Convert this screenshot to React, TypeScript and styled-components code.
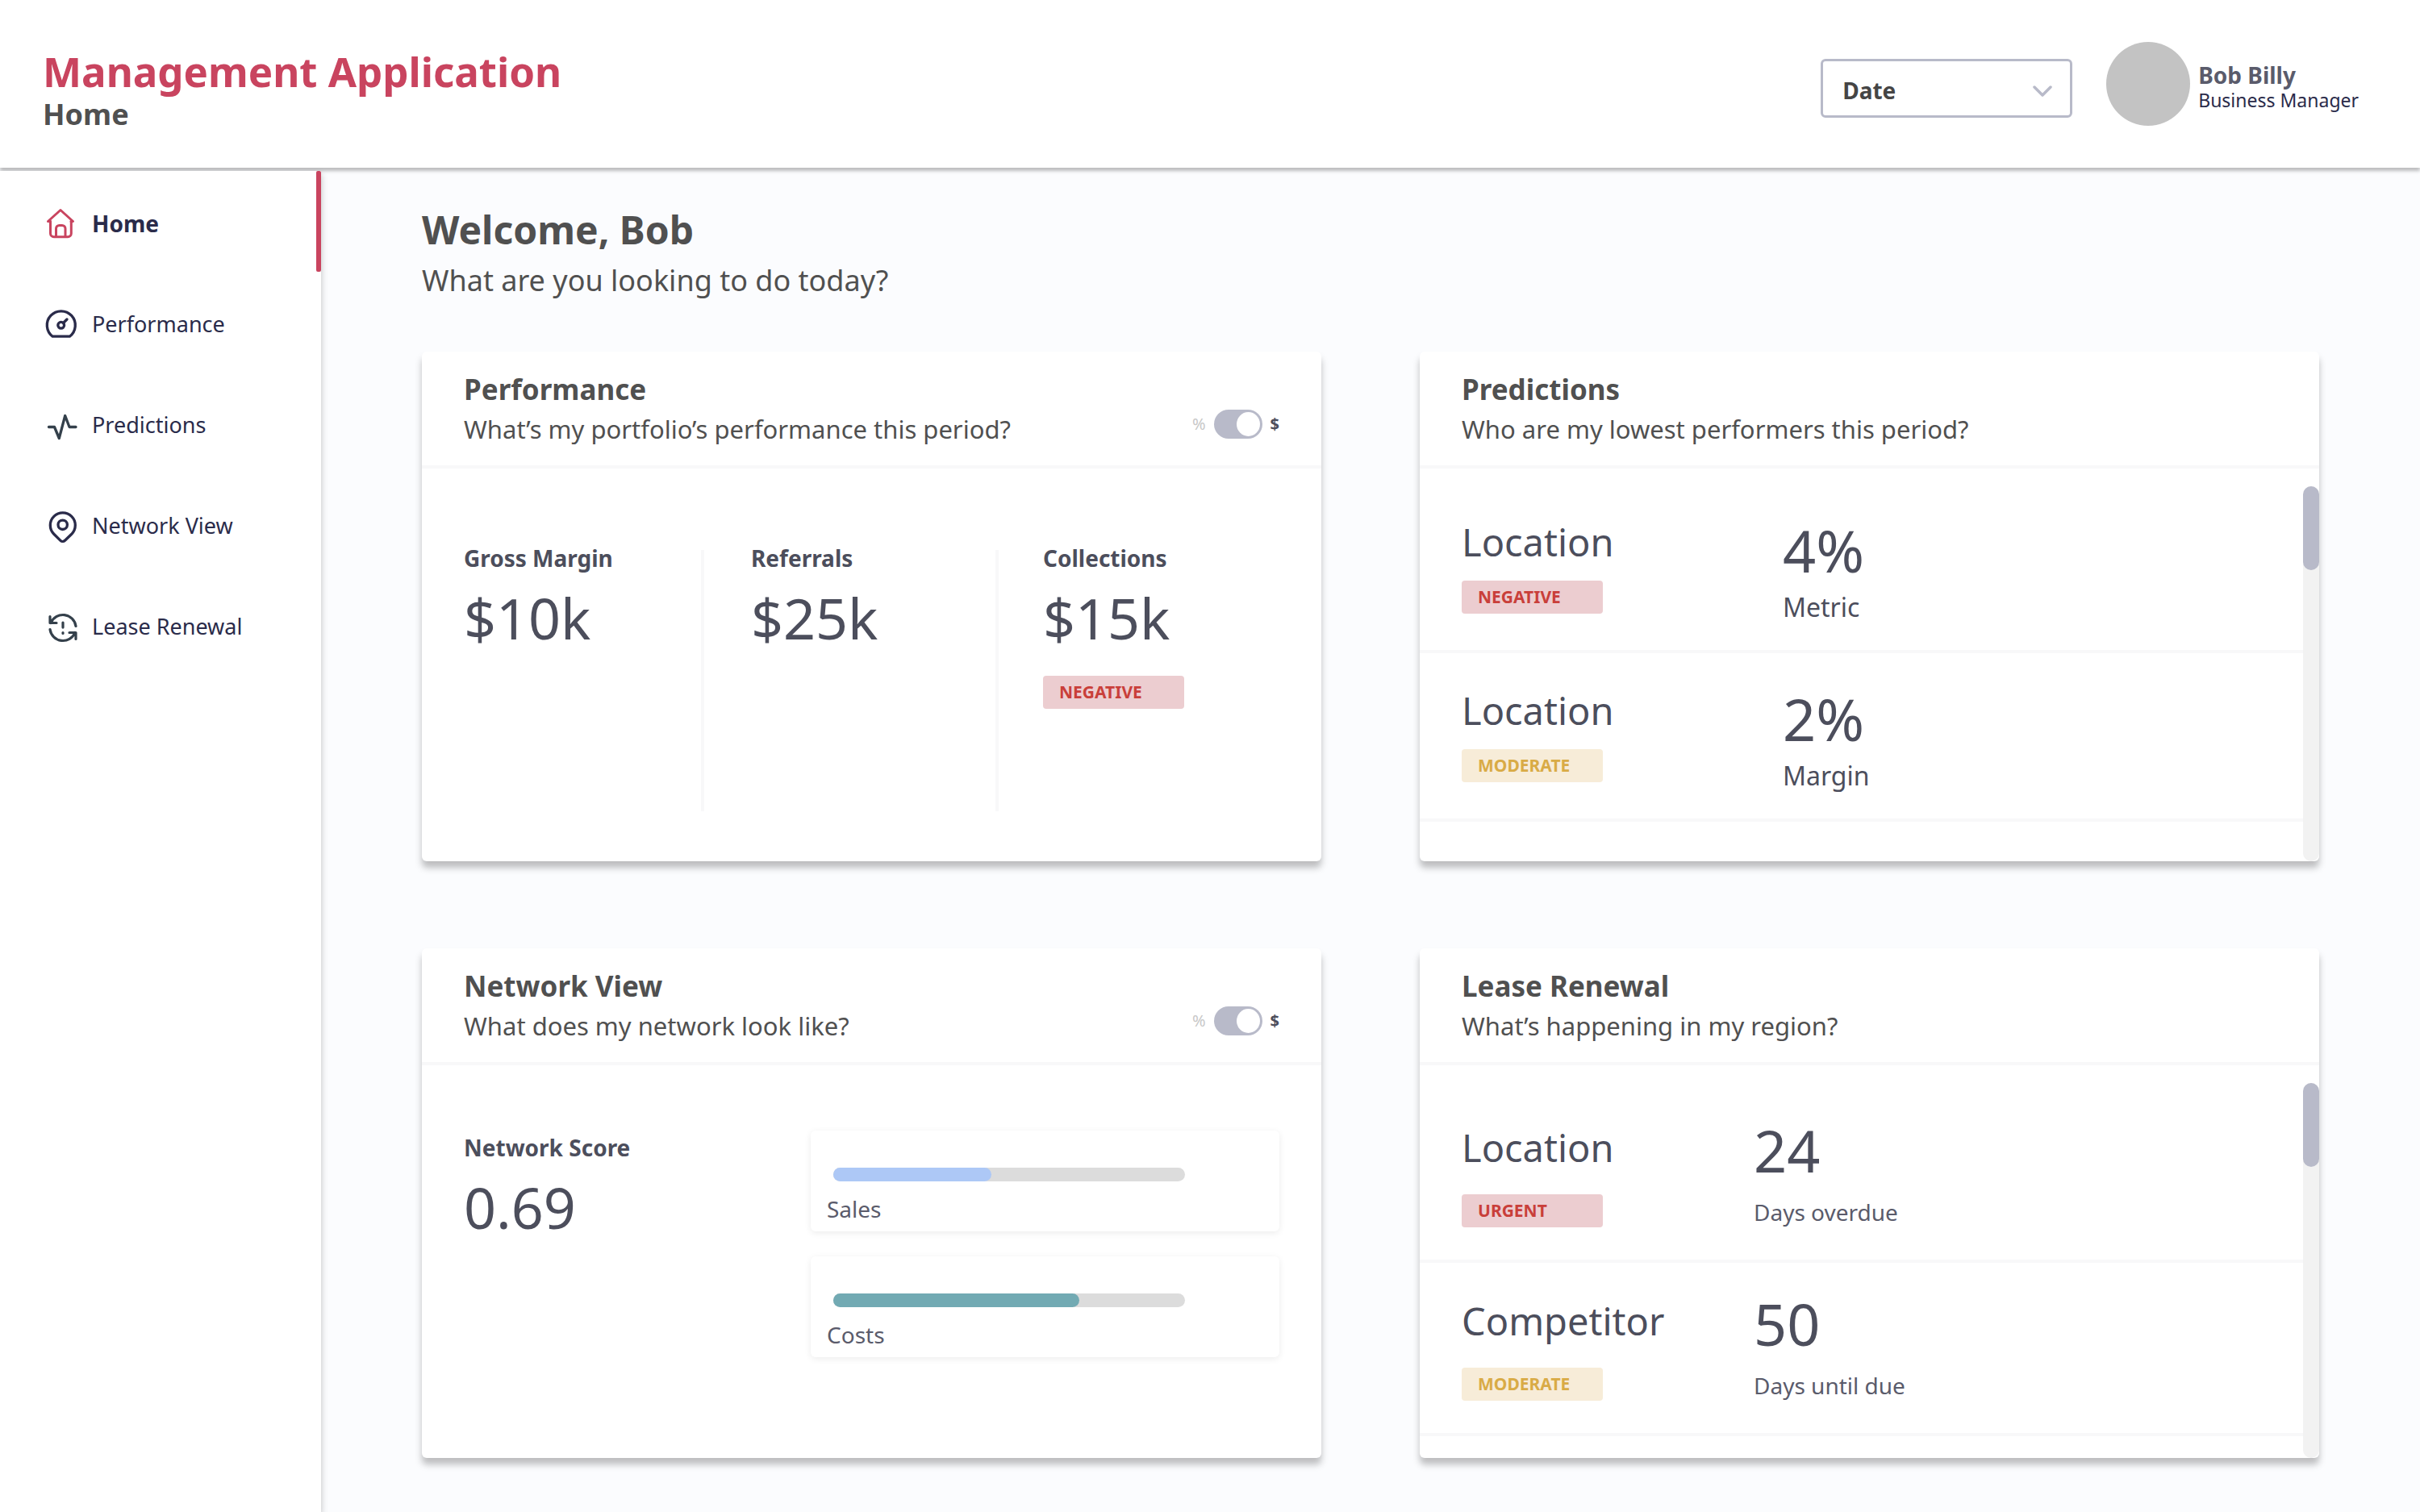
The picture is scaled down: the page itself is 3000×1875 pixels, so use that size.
import React, { useId, useState } from 'react';
import styled, { createGlobalStyle } from 'styled-components';

const color = {
  brand: '#c9445f',
  heading: '#505050',
  ink: '#4c4e5c',
  navy: '#2a2b4a',
  slate: '#34404b',
  muted: '#5a5b6b',
  line: '#f8f8f9',
  control: '#b8bac9',
  canvas: '#fbfcfe',
};

const GlobalStyle = createGlobalStyle`
  *, *::before, *::after { box-sizing: border-box; }
  body {
    margin: 0;
    background: ${color.canvas};
    font-family: "Noto Sans", "Open Sans", sans-serif;
    color: ${color.ink};
  }
  h1, h2, h3, p, ul { margin: 0; padding: 0; }
  ul { list-style: none; }
`;

/* ---------- shell ---------- */

const Page = styled.div`
  display: flex;
  flex-direction: column;
  min-height: 100vh;
`;

const Header = styled.header`
  position: relative;
  z-index: 1;
  display: flex;
  align-items: flex-start;
  padding: 52px 76px 43px 53px;
  background: #fff;
  box-shadow: 0 4px 4px rgba(0, 0, 0, 0.25);
`;

const Brand = styled.div`
  flex: 1;
  padding-top: 5px;
`;

const AppName = styled.p`
  font-size: 51px;
  font-weight: 700;
  line-height: 62px;
  color: ${color.brand};
`;

const PageName = styled.h1`
  font-size: 36px;
  font-weight: 700;
  line-height: 46px;
  color: ${color.heading};
`;

const SelectBox = styled.div`
  display: grid;
  align-items: center;
  width: 312px;
  margin: 21px 42px 0 0;
`;

const DateSelect = styled.select`
  grid-area: 1 / 1;
  width: 100%;
  height: 73px;
  padding: 4px 60px 0 24px;
  border: 3px solid ${color.control};
  border-radius: 6px;
  background: #fff;
  appearance: none;
  font: 700 28px "Noto Sans", sans-serif;
  color: #454545;
`;

const Chevron = styled.svg`
  grid-area: 1 / 1;
  justify-self: end;
  width: 26px;
  height: 16px;
  margin: 6px 24px 0 0;
  pointer-events: none;
`;

const Avatar = styled.div`
  width: 104px;
  height: 104px;
  margin-right: 10px;
  border-radius: 50%;
  background: #c3c3c3;
`;

const UserText = styled.div`
  padding-top: 26px;
`;

const UserName = styled.p`
  font-size: 28px;
  font-weight: 700;
  line-height: 30px;
  color: ${color.muted};
`;

const UserRole = styled.p`
  font-size: 23px;
  line-height: 32px;
  color: ${color.navy};
`;

const Columns = styled.div`
  display: flex;
  flex: 1;
`;

/* ---------- sidebar ---------- */

const Sidebar = styled.nav`
  position: relative;
  z-index: 2;
  flex: none;
  width: 398px;
  margin-top: 4px;
  background: #fff;
  box-shadow: 0 4px 8px rgba(0, 0, 0, 0.25);
`;

const NavLink = styled.a<{ $active?: boolean }>`
  display: flex;
  height: 125px;
  text-decoration: none;
  font-size: ${(p) => (p.$active ? 28 : 27)}px;
  font-weight: ${(p) => (p.$active ? 700 : 400)};
  color: ${color.navy};
`;

const NavLabel = styled.span`
  display: flex;
  flex: 1;
  align-items: center;
  gap: 16px;
  padding: 4px 0 0 54px;
`;

const ActiveBar = styled.span`
  width: 6px;
  border-radius: 2px;
  background: ${color.brand};
`;

const Icon = styled.svg`
  width: 44px;
  height: 44px;
  fill: none;
  stroke-linecap: round;
  stroke-linejoin: round;
`;

const HomeIcon = () => (
  <Icon viewBox="0 0 44 44" stroke={color.brand} strokeWidth="3" aria-hidden="true">
    <path d="M8.5 19.5H5.5L21 5.5L36.5 19.5H34" />
    <path d="M8.5 19.5V34.5a4.3 4.3 0 0 0 4.3 4.3H30a4.3 4.3 0 0 0 4.3-4.3V19.5" />
    <path d="M15.5 38.500V28.500a4 4 0 0 1 4-4h3.500a4 4 0 0 1 4 4V38.500" />
  </Icon>
);

const GaugeIcon = () => (
  <Icon viewBox="0 0 44 44" stroke={color.navy} strokeWidth="3.3" aria-hidden="true">
    <path d="M11.2 37.2A17.5 17.5 0 1 1 32.4 37.2Z" />
    <circle cx="21.7" cy="23.3" r="3.9" />
    <path d="M24.5 20.5L29 16" />
  </Icon>
);

const PulseIcon = () => (
  <Icon viewBox="0 0 44 44" stroke={color.slate} strokeWidth="3.3" aria-hidden="true">
    <path d="M6.5 24.5H13.5L19.3 38.5L26.7 10.5L32 24.5H40" />
  </Icon>
);

const PinIcon = () => (
  <Icon viewBox="0 0 44 44" stroke={color.navy} strokeWidth="3.3" aria-hidden="true">
    <circle cx="23.7" cy="20.8" r="5.7" />
    <path d="M34.8 32.3L26.5 40.3a3.9 3.9 0 0 1-5.5 0L12.8 32.3a15.5 15.5 0 1 1 22 0z" />
  </Icon>
);

const RenewIcon = () => (
  <Icon viewBox="0 0 44 44" stroke={color.slate} strokeWidth="1.6" aria-hidden="true">
    <g transform="translate(0 -0.5) scale(2)">
      <path d="M20 11a8.1 8.1 0 0 0-15.5-2m-.5-4v4h4" />
      <path d="M4 13a8.1 8.1 0 0 0 15.5 2m.5 4v-4h-4" />
      <path d="M12 8.8v3M12 15v.5" />
    </g>
  </Icon>
);

const navItems = [
  { label: 'Home', Glyph: HomeIcon, active: true },
  { label: 'Performance', Glyph: GaugeIcon },
  { label: 'Predictions', Glyph: PulseIcon },
  { label: 'Network View', Glyph: PinIcon },
  { label: 'Lease Renewal', Glyph: RenewIcon },
];

/* ---------- main ---------- */

const Main = styled.main`
  flex: 1;
  min-width: 0;
  padding: 42px 125px 60px;
`;

const Welcome = styled.h2`
  font-size: 48px;
  line-height: 70px;
  color: ${color.heading};
`;

const Lead = styled.p`
  font-size: 36px;
  line-height: 56px;
  color: ${color.heading};
`;

const Cards = styled.div`
  display: grid;
  grid-template-columns: 1fr 1fr;
  gap: 108px 122px;
  margin-top: 60px;
`;

const CardBox = styled.section`
  display: flex;
  flex-direction: column;
  border-radius: 6px;
  background: #fff;
  box-shadow: 0 8px 8px rgba(0, 0, 0, 0.25);
`;

const CardHead = styled.div`
  display: flex;
  justify-content: space-between;
  padding: 22px 52px 21px;
  border-bottom: 4px solid ${color.line};
  color: ${color.heading};
`;

const CardTitle = styled.h3`
  font-size: 35px;
  line-height: 50px;
`;

const CardLead = styled.p`
  font-size: 31px;
  line-height: 48px;
`;

const SwitchLabel = styled.label`
  display: flex;
  align-items: center;
  gap: 10px;
  align-self: flex-start;
  margin-top: 50px;
  font-size: 20px;
  line-height: 36px;
`;

const Unit = styled.span<{ $on: boolean }>`
  font-weight: ${(p) => (p.$on ? 700 : 400)};
  color: ${(p) => (p.$on ? color.ink : '#c8c8c8')};
`;

const Switch = styled.input`
  display: flex;
  align-items: center;
  justify-content: flex-start;
  width: 60px;
  height: 36px;
  margin: 0;
  padding: 3px;
  border-radius: 18px;
  background: ${color.control};
  appearance: none;

  &::before {
    content: '';
    width: 29px;
    height: 30px;
    border-radius: 50%;
    background: #fff;
  }

  &:checked {
    justify-content: flex-end;
  }
`;

function UnitSwitch() {
  const [dollars, setDollars] = useState(true);
  return (
    <SwitchLabel>
      <Unit $on={!dollars}>%</Unit>
      <Switch
        type="checkbox"
        role="switch"
        checked={dollars}
        onChange={(e) => setDollars(e.target.checked)}
      />
      <Unit $on={dollars}>$</Unit>
    </SwitchLabel>
  );
}

type CardProps = {
  title: string;
  lead: string;
  withSwitch?: boolean;
  children: React.ReactNode;
};

function Card({ title, lead, withSwitch, children }: CardProps) {
  return (
    <CardBox>
      <CardHead>
        <div>
          <CardTitle>{title}</CardTitle>
          <CardLead>{lead}</CardLead>
        </div>
        {withSwitch && <UnitSwitch />}
      </CardHead>
      {children}
    </CardBox>
  );
}

const tones = {
  bad: { bg: '#eccdd0', fg: '#c93f3a' },
  fair: { bg: '#f7ecd8', fg: '#d9ab46' },
};

const Tag = styled.span<{ $tone: keyof typeof tones }>`
  display: block;
  width: 175px;
  padding-left: 20px;
  border-radius: 4px;
  background: ${(p) => tones[p.$tone].bg};
  font-size: 21px;
  font-weight: 700;
  line-height: 41px;
  color: ${(p) => tones[p.$tone].fg};
`;

/* ---------- stats ---------- */

const StatGrid = styled.div`
  display: grid;
  grid-template-columns: 350fr 365fr 400fr;
  padding: 101px 0 62px;
`;

const StatCell = styled.div`
  min-height: 324px;
  padding-left: 58px;
  border-right: 4px solid ${color.line};

  &:first-child { padding-left: 52px; }
  &:last-child { border-right: 0; padding-left: 55px; }
`;

const StatLabel = styled.p`
  font-size: 28px;
  font-weight: 700;
  line-height: 20px;
`;

const Figure = styled.p`
  font-size: 72px;
  line-height: 80px;
`;

const Stat = styled.div`
  ${Figure} {
    margin-top: 24px;
    font-size: 70px;
  }
  ${Tag} { margin-top: 32px; }
`;

/* ---------- ranked lists ---------- */

const ListBody = styled.div`
  display: flex;
  flex: 1;
`;

const List = styled.ul<{ $top: number; $bottom: number }>`
  flex: 1;
  padding: ${(p) => p.$top}px 0 ${(p) => p.$bottom}px;
`;

type RowSize = {
  height: number;
  nameTop: number;
  nameWidth: number;
  tagGap: number;
  valueTop: number;
  noteGap: number;
  noteSize: number;
};

const Row = styled.li<{ $size: RowSize }>`
  display: grid;
  grid-template-columns: ${(p) => p.$size.nameWidth}px 1fr;
  min-height: ${(p) => p.$size.height}px;
  padding: 0 52px;
  border-bottom: 4px solid ${color.line};
`;

const NameCell = styled.div<{ $size: RowSize }>`
  padding-top: ${(p) => p.$size.nameTop}px;
  ${Tag} { margin-top: ${(p) => p.$size.tagGap}px; }
`;

const Name = styled.p`
  font-size: 47px;
  line-height: 56px;
`;

const ValueCell = styled.div<{ $size: RowSize }>`
  padding-top: ${(p) => p.$size.valueTop}px;
`;

const Note = styled.p<{ $size: RowSize }>`
  margin-top: ${(p) => p.$size.noteGap}px;
  font-size: ${(p) => p.$size.noteSize}px;
  line-height: 40px;
  color: ${(p) => (p.$size.noteSize > 30 ? color.ink : color.muted)};
`;

const ScrollTrack = styled.div`
  width: 20px;
  margin-top: 22px;
  border-radius: 10px;
  background: #f2f2f2;
`;

const ScrollThumb = styled.div`
  height: 104px;
  border-radius: 10px;
  background: ${color.control};
`;

type Item = { name: string; tag: string; tone: keyof typeof tones; value: string; note: string };

function RankedList({ items, size, top, bottom }: { items: Item[]; size: RowSize; top: number; bottom: number }) {
  return (
    <ListBody>
      <List $top={top} $bottom={bottom}>
        {items.map((item, i) => (
          <Row key={i} $size={size}>
            <NameCell $size={size}>
              <Name>{item.name}</Name>
              <Tag $tone={item.tone}>{item.tag}</Tag>
            </NameCell>
            <ValueCell $size={size}>
              <Figure>{item.value}</Figure>
              <Note $size={size}>{item.note}</Note>
            </ValueCell>
          </Row>
        ))}
      </List>
      <ScrollTrack>
        <ScrollThumb />
      </ScrollTrack>
    </ListBody>
  );
}

const predictionRows: RowSize = {
  height: 209, nameTop: 43, nameWidth: 398, tagGap: 20, valueTop: 41, noteGap: 11, noteSize: 32,
};
const leaseRows: RowSize = {
  height: 215, nameTop: 44, nameWidth: 362, tagGap: 30, valueTop: 35, noteGap: 17, noteSize: 28,
};

const predictions: Item[] = [
  { name: 'Location', tag: 'NEGATIVE', tone: 'bad', value: '4%', note: 'Metric' },
  { name: 'Location', tag: 'MODERATE', tone: 'fair', value: '2%', note: 'Margin' },
];
const leases: Item[] = [
  { name: 'Location', tag: 'URGENT', tone: 'bad', value: '24', note: 'Days overdue' },
  { name: 'Competitor', tag: 'MODERATE', tone: 'fair', value: '50', note: 'Days until due' },
];

/* ---------- network ---------- */

const NetworkBody = styled.div`
  display: grid;
  grid-template-columns: 430fr 581fr;
  align-items: start;
  padding: 81px 52px 125px;
`;

const Score = styled(Stat)`
  padding-top: 11px;
`;

const Meters = styled.div`
  display: grid;
  gap: 31px;
`;

const MeterCard = styled.div`
  padding: 46px 20px 8px;
  border-radius: 6px;
  background: #fff;
  box-shadow: 0 2px 8px rgba(0, 0, 0, 0.08);
`;

const MeterTrack = styled.div`
  height: 17px;
  margin: 0 97px 0 8px;
  border-radius: 9px;
  background: #dcdcdc;
`;

const MeterFill = styled.div<{ $tint: string }>`
  height: 100%;
  border-radius: 9px;
  background: ${(p) => p.$tint};
`;

const MeterLabel = styled.p`
  margin-top: 14px;
  font-size: 28px;
  line-height: 40px;
  color: ${color.muted};
`;

function Meter({ label, percent, tint }: { label: string; percent: number; tint: string }) {
  const id = useId();
  return (
    <MeterCard>
      <MeterTrack role="meter" aria-labelledby={id} aria-valuenow={percent} aria-valuemin={0} aria-valuemax={100}>
        <MeterFill $tint={tint} style={{ width: `${percent}%` }} />
      </MeterTrack>
      <MeterLabel id={id}>{label}</MeterLabel>
    </MeterCard>
  );
}

export default function App() {
  return (
    <Page>
      <GlobalStyle />
      <Header>
        <Brand>
          <AppName>Management Application</AppName>
          <PageName>Home</PageName>
        </Brand>
        <SelectBox>
          <DateSelect aria-label="Date" defaultValue="date">
            <option value="date">Date</option>
          </DateSelect>
          <Chevron viewBox="0 0 26 16" fill="none" stroke={color.control} strokeWidth="3.5" strokeLinecap="round" strokeLinejoin="round" aria-hidden="true">
            <path d="M3 3L13 13L23 3" />
          </Chevron>
        </SelectBox>
        <Avatar />
        <UserText>
          <UserName>Bob Billy</UserName>
          <UserRole>Business Manager</UserRole>
        </UserText>
      </Header>
      <Columns>
        <Sidebar>
          <ul>
            {navItems.map(({ label, Glyph, active }) => (
              <li key={label}>
                <NavLink href="#" $active={active} aria-current={active ? 'page' : undefined}>
                  <NavLabel>
                    <Glyph />
                    {label}
                  </NavLabel>
                  {active && <ActiveBar />}
                </NavLink>
              </li>
            ))}
          </ul>
        </Sidebar>
        <Main>
          <Welcome>Welcome, Bob</Welcome>
          <Lead>What are you looking to do today?</Lead>
          <Cards>
            <Card title="Performance" lead="What’s my portfolio’s performance this period?" withSwitch>
              <StatGrid>
                <StatCell>
                  <Stat>
                    <StatLabel>Gross Margin</StatLabel>
                    <Figure>$10k</Figure>
                  </Stat>
                </StatCell>
                <StatCell>
                  <Stat>
                    <StatLabel>Referrals</StatLabel>
                    <Figure>$25k</Figure>
                  </Stat>
                </StatCell>
                <StatCell>
                  <Stat>
                    <StatLabel>Collections</StatLabel>
                    <Figure>$15k</Figure>
                    <Tag $tone="bad">NEGATIVE</Tag>
                  </Stat>
                </StatCell>
              </StatGrid>
            </Card>
            <Card title="Predictions" lead="Who are my lowest performers this period?">
              <RankedList items={predictions} size={predictionRows} top={20} bottom={49} />
            </Card>
            <Card title="Network View" lead="What does my network look like?" withSwitch>
              <NetworkBody>
                <Score>
                  <StatLabel>Network Score</StatLabel>
                  <Figure>0.69</Figure>
                </Score>
                <Meters>
                  <Meter label="Sales" percent={45} tint="#adc8f6" />
                  <Meter label="Costs" percent={70} tint="#72aab3" />
                </Meters>
              </NetworkBody>
            </Card>
            <Card title="Lease Renewal" lead="What’s happening in my region?">
              <RankedList items={leases} size={leaseRows} top={30} bottom={27} />
            </Card>
          </Cards>
        </Main>
      </Columns>
    </Page>
  );
}
